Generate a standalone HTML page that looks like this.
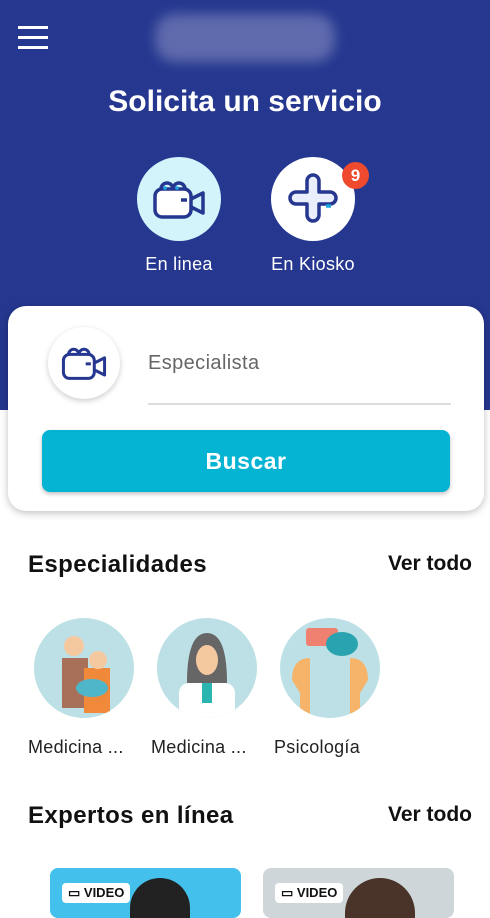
<!DOCTYPE html>
<html><head><meta charset="utf-8"><style>
*{margin:0;padding:0;box-sizing:border-box}
body{width:490px;height:904px;overflow:hidden;background:#fff;font-family:"Liberation Sans",sans-serif;position:relative}
.hdr{position:absolute;left:0;top:0;width:490px;height:410px;background:#25378f}
.abs{position:absolute}
.ham div{width:30px;height:3px;background:#fff;margin-bottom:7px}
.logo{left:155px;top:14px;width:180px;height:48px;border-radius:20px;background:#6e78b5;filter:blur(6px);opacity:.8}
h1{position:absolute;top:85px;width:490px;text-align:center;color:#fff;font-size:30px;font-weight:bold}
.circ{width:84px;height:84px;border-radius:50%}
.lbl{color:#fff;font-size:18px;text-align:center;width:140px;letter-spacing:.3px}
.card{left:8px;top:306px;width:476px;height:205px;background:#fff;border-radius:18px;box-shadow:0 2px 8px rgba(0,0,0,.25)}
.btn{left:42px;top:430px;width:408px;height:62px;background:#05b3d3;border-radius:8px;color:#fff;font-size:23px;font-weight:bold;text-align:center;line-height:62px;box-shadow:0 2px 4px rgba(0,0,0,.25);letter-spacing:.5px}
.st{font-size:24px;font-weight:bold;color:#111;letter-spacing:.4px}
.vt{font-size:21px;font-weight:bold;color:#111}
.sc{width:100px;height:100px;border-radius:50%;background:#bde0e6;overflow:hidden}
.sl{font-size:18px;color:#222;letter-spacing:.3px}
.vid{background:#fff;border-radius:4px;font-size:13px;font-weight:bold;padding:2px 6px;color:#111}
</style></head><body>
<div class="hdr"></div>
<div class="abs ham" style="left:18px;top:26px"><div></div><div></div><div></div></div>
<div class="abs logo"></div>
<h1>Solicita un servicio</h1>
<div class="abs circ" style="left:137px;top:157px;background:#d4f4fb">
<svg width="84" height="84" viewBox="0 0 84 84"><g fill="none" stroke="#26378f" stroke-width="3.5" stroke-linejoin="round"><path d="M24 32a6 6 0 0 1 12 0M36 32a6 6 0 0 1 12 0"/><rect x="18" y="32" width="36" height="28" rx="7" fill="#fff"/><path d="M54 42 L66 36 V56 L54 50"/><path d="M44 43h6"/></g><circle cx="28" cy="31" r="1.8" fill="#1aa7e0"/><circle cx="40" cy="31" r="1.8" fill="#1aa7e0"/></svg></div>
<div class="abs circ" style="left:271px;top:157px;background:#fff">
<svg width="84" height="84" viewBox="0 0 84 84"><path d="M36 24a6 6 0 0 1 12 0v11h11a6 6 0 0 1 0 12H48v11a6 6 0 0 1-12 0V47H25a6 6 0 0 1 0-12h11z" fill="#e8eefb" stroke="#26378f" stroke-width="3.5" stroke-linejoin="round"/><path d="M55 49h5" stroke="#1aa7e0" stroke-width="3.5"/></svg></div>
<div class="abs" style="left:342px;top:162px;width:27px;height:27px;border-radius:50%;background:#ef4a2e;color:#fff;font-weight:bold;font-size:17px;text-align:center;line-height:27px">9</div>
<div class="abs lbl" style="left:109px;top:254px">En linea</div>
<div class="abs lbl" style="left:243px;top:254px">En Kiosko</div>
<div class="abs card"></div>
<div class="abs" style="left:48px;top:327px;width:72px;height:72px;border-radius:50%;background:#fff;box-shadow:0 2px 6px rgba(0,0,0,.2)">
<svg width="72" height="72" viewBox="0 0 84 84"><g fill="none" stroke="#26378f" stroke-width="3.5" stroke-linejoin="round"><path d="M24 32a6 6 0 0 1 12 0M36 32a6 6 0 0 1 12 0"/><rect x="18" y="32" width="36" height="28" rx="7" fill="#fff"/><path d="M54 42 L66 36 V56 L54 50"/><path d="M44 43h6"/></g></svg></div>
<div class="abs" style="left:148px;top:352px;font-size:20px;color:#666;letter-spacing:.4px">Especialista</div>
<div class="abs" style="left:148px;top:403px;width:303px;height:2px;background:#ddd"></div>
<div class="abs btn">Buscar</div>
<div class="abs st" style="left:28px;top:551px">Especialidades</div>
<div class="abs vt" style="left:388px;top:552px">Ver todo</div>
<div class="abs sc" style="left:34px;top:618px"><svg width="100" height="100"><rect x="28" y="40" width="26" height="50" fill="#a87058"/><circle cx="40" cy="28" r="10" fill="#f5c9a0"/><rect x="50" y="50" width="26" height="45" fill="#f08a3a"/><circle cx="64" cy="42" r="9" fill="#f5c9a0"/><ellipse cx="58" cy="70" rx="16" ry="9" fill="#4fb5c8"/></svg></div>
<div class="abs sc" style="left:157px;top:618px"><svg width="100" height="100"><path d="M30 65 Q30 15 50 15 Q70 15 70 65z" fill="#666"/><ellipse cx="50" cy="42" rx="11" ry="15" fill="#f5c9a0"/><rect x="22" y="65" width="56" height="40" rx="10" fill="#fff"/><rect x="45" y="65" width="10" height="20" fill="#2bb5b0"/></svg></div>
<div class="abs sc" style="left:280px;top:618px"><svg width="100" height="100"><rect x="26" y="10" width="32" height="18" rx="3" fill="#f08070"/><ellipse cx="62" cy="26" rx="16" ry="12" fill="#2aa3b0"/><path d="M12 62 Q12 40 30 40 L30 100 L20 100 L20 75z" fill="#f5b46a"/><path d="M88 62 Q88 40 70 40 L70 100 L80 100 L80 75z" fill="#f5b46a"/></svg></div>
<div class="abs sl" style="left:28px;top:737px">Medicina ...</div>
<div class="abs sl" style="left:151px;top:737px">Medicina ...</div>
<div class="abs sl" style="left:274px;top:737px">Psicología</div>
<div class="abs st" style="left:28px;top:802px">Expertos en línea</div>
<div class="abs vt" style="left:388px;top:803px">Ver todo</div>
<div class="abs" style="left:50px;top:868px;width:191px;height:50px;background:#44c0ec;border-radius:8px"></div>
<div class="abs" style="left:263px;top:868px;width:191px;height:50px;background:#cfd6da;border-radius:8px"></div>
<div class="abs" style="left:130px;top:878px;width:60px;height:40px;border-radius:30px 30px 0 0;background:#222"></div>
<div class="abs" style="left:345px;top:878px;width:70px;height:40px;border-radius:35px 35px 0 0;background:#4a3328"></div>
<div class="abs vid" style="left:62px;top:883px">▭ VIDEO</div>
<div class="abs vid" style="left:275px;top:883px">▭ VIDEO</div>
</body></html>
